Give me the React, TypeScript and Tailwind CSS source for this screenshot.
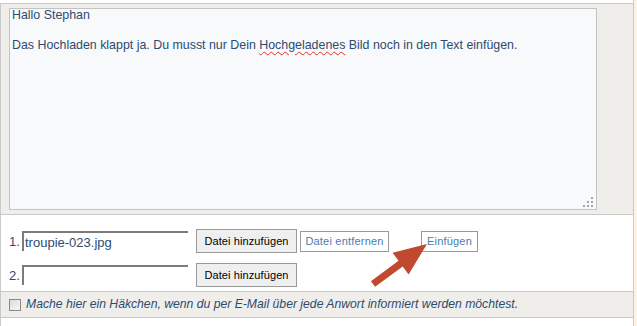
import React from 'react';

const FileRow: React.FC<{ n: number; value?: string; extra?: boolean }> = ({ n, value, extra }) => (
  <div className="flex items-center h-[24px]">
    <span className="w-[13px] text-[13px] leading-none text-[#2d4b6f]">{n}.</span>
    <div className="w-[166px] h-[20px] border-t-2 border-l-2 border-t-[#7b7b7b] border-l-[#7b7b7b] bg-white flex items-center pl-[1px] text-[13px] text-[#2d4b6f] leading-none">
      {value}
    </div>
    <button className="ml-[8px] w-[101px] h-[24px] border border-[#9a9a9a] bg-[#efefef] text-[11px] tracking-[0.1px] text-black leading-none">
      Datei hinzufügen
    </button>
    {extra && (
      <>
        <button className="ml-[3px] w-[89px] h-[21px] border border-[#9a9a9a] bg-white text-[11px] tracking-[0.2px] text-[#4b7db0] leading-none">
          Datei entfernen
        </button>
        <button className="ml-[32px] w-[57px] h-[21px] border border-[#9a9a9a] bg-white text-[11px] tracking-[0.2px] text-[#4b7db0] leading-none">
          Einfügen
        </button>
      </>
    )}
  </div>
);

export default function App() {
  return (
    <div className="relative w-[637px] h-[326px] bg-white flex overflow-hidden" style={{ fontFamily: '"Liberation Sans", Arial, sans-serif' }}>
      <div className="w-[634px] h-full pt-[3px] border-r border-[#c9c9c9]">
        <div className="border-t border-l border-[#c9c9c9] h-full flex flex-col">
          {/* editor area */}
          <div className="bg-[#efeeea] pt-[4px] pl-[8px] pb-[4px] border-b border-[#c9c9c9]">
            <div className="relative w-[588px] h-[202px] border border-[#c2c2c2] bg-[#f8f9fb] pl-[2px] text-[12.4px] leading-[15px] text-[#2d4b6f]">
              <div className="-mt-[1px]">
                <p>Hallo Stephan</p>
                <p>&nbsp;</p>
                <p>
                  Das Hochladen klappt ja. Du musst nur Dein{' '}
                  <span className="underline decoration-wavy decoration-[#e0302a] decoration-1 underline-offset-2">Hochgeladenes</span>{' '}
                  Bild noch in den Text einfügen.
                </p>
              </div>
              <svg className="absolute right-[2px] bottom-[1px]" width="12" height="12" viewBox="0 0 12 12">
                <g fill="#a5a5a5">
                  <rect x="9" y="1" width="2" height="2" />
                  <rect x="5" y="5" width="2" height="2" />
                  <rect x="9" y="5" width="2" height="2" />
                  <rect x="1" y="9" width="2" height="2" />
                  <rect x="5" y="9" width="2" height="2" />
                  <rect x="9" y="9" width="2" height="2" />
                </g>
              </svg>
            </div>
          </div>
          {/* uploads */}
          <div className="bg-white pt-[14px] pl-[8px] h-[76px] flex flex-col gap-[10px]">
            <FileRow n={1} value="troupie-023.jpg" extra />
            <FileRow n={2} />
          </div>
          {/* notify */}
          <div className="h-[27px] bg-[#efeeea] border-t border-b border-[#c9c9c9] flex items-center pl-[8px]">
            <span className="w-[12px] h-[12px] border border-[#8a8a8a] bg-gradient-to-br from-[#dcdcdc] to-[#f7f7f7]" />
            <span className="ml-[5px] text-[12.2px] italic text-[#2d4b6f]">
              Mache hier ein Häkchen, wenn du per E-Mail über jede Anwort informiert werden möchtest.
            </span>
          </div>
          <div className="flex-1 bg-white" />
        </div>
      </div>
      <div className="flex-1 bg-[#fdf3e3]" />
      <svg className="absolute left-0 top-0 pointer-events-none" width="637" height="326">
        <polygon
          fill="#c0492f"
          points="370.9,281.2 398.5,260.8 392.6,252.8 427,244 408.6,274.4 402.7,266.4 375.1,286.8"
        />
      </svg>
    </div>
  );
}
